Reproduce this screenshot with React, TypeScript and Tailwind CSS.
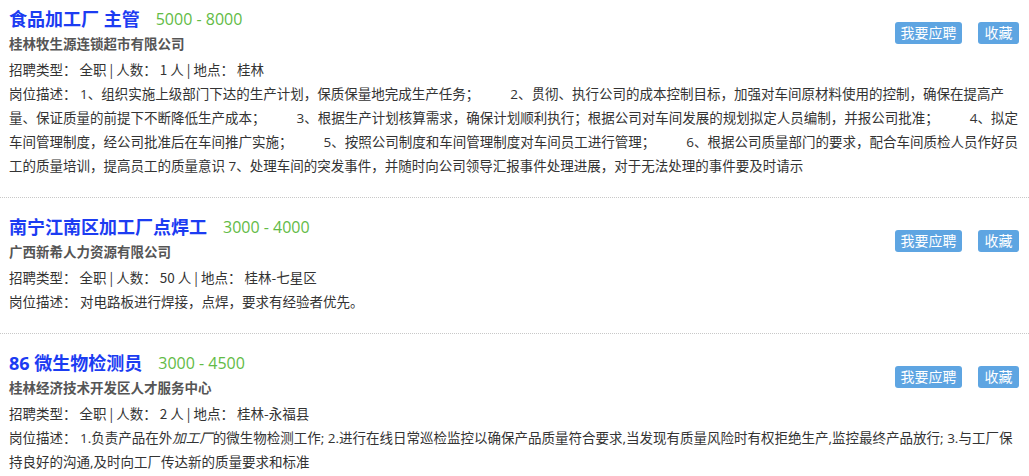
import type { ReactNode } from 'react';

type Job = {
  title: string;
  salary: string;
  company: string;
  count: string;
  place: string;
  desc: ReactNode[];
};

const Gap = () => <span className="inline-block w-[31px]" />;

const jobs: Job[] = [
  {
    title: '食品加工厂 主管',
    salary: '5000 - 8000',
    company: '桂林牧生源连锁超市有限公司',
    count: '1',
    place: '桂林',
    desc: [
      <>岗位描述： 1、组织实施上级部门下达的生产计划，保质保量地完成生产任务；<Gap />2、贯彻、执行公司的成本控制目标，加强对车间原材料使用的控制，确保在提高产</>,
      <>量、保证质量的前提下不断降低生产成本；<Gap />3、根据生产计划核算需求，确保计划顺利执行；根据公司对车间发展的规划拟定人员编制，并报公司批准；<Gap />4、拟定</>,
      <>车间管理制度，经公司批准后在车间推广实施；<Gap />5、按照公司制度和车间管理制度对车间员工进行管理；<Gap />6、根据公司质量部门的要求，配合车间质检人员作好员</>,
      <>工的质量培训，提高员工的质量意识 7、处理车间的突发事件，并随时向公司领导汇报事件处理进展，对于无法处理的事件要及时请示</>,
    ],
  },
  {
    title: '南宁江南区加工厂点焊工',
    salary: '3000 - 4000',
    company: '广西新希人力资源有限公司',
    count: '50',
    place: '桂林-七星区',
    desc: [<>岗位描述： 对电路板进行焊接，点焊，要求有经验者优先。</>],
  },
  {
    title: '86 微生物检测员',
    salary: '3000 - 4500',
    company: '桂林经济技术开发区人才服务中心',
    count: '2',
    place: '桂林-永福县',
    desc: [
      <>岗位描述： 1.负责产品在外<em>加工厂</em>的微生物检测工作; 2.进行在线日常巡检监控以确保产品质量符合要求,当发现有质量风险时有权拒绝生产,监控最终产品放行; 3.与工厂保</>,
      <>持良好的沟通,及时向工厂传达新的质量要求和标准</>,
    ],
  },
];

function JobCard({ job }: { job: Job }) {
  return (
    <div className="border-b border-dotted border-[#c8c8c8] pt-[17px] pb-[19px] pl-[9px] pr-[10px]">
      <div className="flex justify-between">
        <div>
          <div className="flex items-center leading-[25px]">
            <span className="text-[18px] font-bold text-[#1c3cf2]">{job.title}</span>
            <span className="ml-[16px] text-[16px] text-[#62bb46]">{job.salary}</span>
          </div>
          <div className="text-[13.5px] font-bold leading-[25px] text-[#555]">{job.company}</div>
          <div className="font-['Noto_Sans_CJK_SC',sans-serif] text-[13.5px] leading-[25px] text-[#333]">
            招聘类型： 全职 | 人数： {job.count} 人 | 地点： {job.place}
          </div>
        </div>
        <div className="mt-[15px] flex gap-[16px]">
          <button className="h-[22px] w-[67px] rounded-[3px] bg-[#5ea5e2] text-[14px] leading-[22px] text-white">
            我要应聘
          </button>
          <button className="h-[22px] w-[41px] rounded-[3px] bg-[#5ea5e2] text-[14px] leading-[22px] text-white">
            收藏
          </button>
        </div>
      </div>
      <div className="text-[13.5px] leading-[24px] text-[#333]">
        {job.desc.map((line, i) => (
          <div key={i} className="whitespace-nowrap">
            {line}
          </div>
        ))}
      </div>
    </div>
  );
}

export default function App() {
  return (
    <div className="h-[476px] w-full overflow-hidden bg-white font-['Open_Sans','Noto_Sans_CJK_SC',sans-serif]">
      <div className="-mt-[10px]">
        {jobs.map((job) => (
          <JobCard key={job.title} job={job} />
        ))}
      </div>
    </div>
  );
}
